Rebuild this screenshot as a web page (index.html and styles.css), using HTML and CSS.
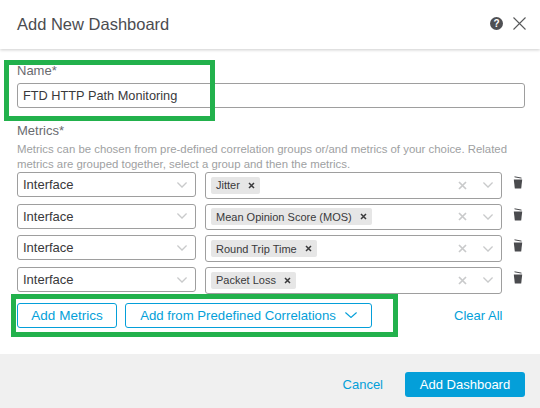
FILE: index.html
```html
<!DOCTYPE html>
<html lang="en">
<head>
<meta charset="utf-8">
<title>Add New Dashboard</title>
<link rel="stylesheet" href="styles.css">
</head>
<body>
<div class="dialog">
  <header class="head">
    <h1 class="title">Add New Dashboard</h1>
    <div class="head-icons">
      <svg class="help" width="13" height="13" viewBox="0 0 13 13"><circle cx="6.5" cy="6.5" r="6.5" fill="#4f5054"/><text x="6.5" y="10" class="help-q">?</text></svg>
      <svg width="13" height="13" viewBox="0 0 13 13"><path d="M.5.5l12 12M12.500.5l-12 12" stroke="#58595b" stroke-width="1.100" fill="none"/></svg>
    </div>
  </header>
  <main class="body">
    <label class="label">Name*</label>
    <div class="name-input">FTD HTTP Path Monitoring</div>
    <label class="label metrics-label">Metrics*</label>
    <p class="hint">Metrics can be chosen from pre-defined correlation groups or/and metrics of your choice. Related metrics are grouped together, select a group and then the metrics.</p>
    <div class="rows">
      <div class="row">
        <div class="select">Interface<svg width="10" height="6" viewBox="0 0 10 6"><path d="M.4.500l4.600 4.500 4.600-4.500" stroke="#c9cacb" stroke-width="1.300" fill="none"/></svg></div>
        <div class="multi"><span class="tag">Jitter<svg class="tag-x" width="7" height="7" viewBox="0 0 7 7"><path d="M1 1l5 5M6 1l-5 5" stroke="#39393b" stroke-width="1.500"/></svg></span>
          <span class="multi-icons"><svg width="9" height="9" viewBox="0 0 9 9"><path d="M1 1l7 7M8 1l-7 7" stroke="#c9cacb" stroke-width="1.700"/></svg><svg width="10" height="6" viewBox="0 0 10 6"><path d="M.4.500l4.600 4.500 4.600-4.500" stroke="#c9cacb" stroke-width="1.300" fill="none"/></svg></span></div>
        <svg class="trash" width="10" height="13" viewBox="0 0 10 13"><path d="M1.500.8l7 1.300" stroke="#4a4b4e" stroke-width="1"/><path d="M.8 3.500h8.400l-1 9h-6.400z" fill="#4a4b4e"/></svg>
      </div>
      <div class="row">
        <div class="select">Interface<svg width="10" height="6" viewBox="0 0 10 6"><path d="M.4.500l4.600 4.500 4.600-4.500" stroke="#c9cacb" stroke-width="1.300" fill="none"/></svg></div>
        <div class="multi"><span class="tag">Mean Opinion Score (MOS)<svg class="tag-x" width="7" height="7" viewBox="0 0 7 7"><path d="M1 1l5 5M6 1l-5 5" stroke="#39393b" stroke-width="1.500"/></svg></span>
          <span class="multi-icons"><svg width="9" height="9" viewBox="0 0 9 9"><path d="M1 1l7 7M8 1l-7 7" stroke="#c9cacb" stroke-width="1.700"/></svg><svg width="10" height="6" viewBox="0 0 10 6"><path d="M.4.500l4.600 4.500 4.600-4.500" stroke="#c9cacb" stroke-width="1.300" fill="none"/></svg></span></div>
        <svg class="trash" width="10" height="13" viewBox="0 0 10 13"><path d="M1.500.8l7 1.300" stroke="#4a4b4e" stroke-width="1"/><path d="M.8 3.500h8.400l-1 9h-6.400z" fill="#4a4b4e"/></svg>
      </div>
      <div class="row">
        <div class="select">Interface<svg width="10" height="6" viewBox="0 0 10 6"><path d="M.4.500l4.600 4.500 4.600-4.500" stroke="#c9cacb" stroke-width="1.300" fill="none"/></svg></div>
        <div class="multi"><span class="tag">Round Trip Time<svg class="tag-x" width="7" height="7" viewBox="0 0 7 7"><path d="M1 1l5 5M6 1l-5 5" stroke="#39393b" stroke-width="1.500"/></svg></span>
          <span class="multi-icons"><svg width="9" height="9" viewBox="0 0 9 9"><path d="M1 1l7 7M8 1l-7 7" stroke="#c9cacb" stroke-width="1.700"/></svg><svg width="10" height="6" viewBox="0 0 10 6"><path d="M.4.500l4.600 4.500 4.600-4.500" stroke="#c9cacb" stroke-width="1.300" fill="none"/></svg></span></div>
        <svg class="trash" width="10" height="13" viewBox="0 0 10 13"><path d="M1.500.8l7 1.300" stroke="#4a4b4e" stroke-width="1"/><path d="M.8 3.500h8.400l-1 9h-6.400z" fill="#4a4b4e"/></svg>
      </div>
      <div class="row">
        <div class="select">Interface<svg width="10" height="6" viewBox="0 0 10 6"><path d="M.4.500l4.600 4.500 4.600-4.500" stroke="#c9cacb" stroke-width="1.300" fill="none"/></svg></div>
        <div class="multi"><span class="tag">Packet Loss<svg class="tag-x" width="7" height="7" viewBox="0 0 7 7"><path d="M1 1l5 5M6 1l-5 5" stroke="#39393b" stroke-width="1.500"/></svg></span>
          <span class="multi-icons"><svg width="9" height="9" viewBox="0 0 9 9"><path d="M1 1l7 7M8 1l-7 7" stroke="#c9cacb" stroke-width="1.700"/></svg><svg width="10" height="6" viewBox="0 0 10 6"><path d="M.4.500l4.600 4.500 4.600-4.500" stroke="#c9cacb" stroke-width="1.300" fill="none"/></svg></span></div>
        <svg class="trash" width="10" height="13" viewBox="0 0 10 13"><path d="M1.500.8l7 1.300" stroke="#4a4b4e" stroke-width="1"/><path d="M.8 3.500h8.400l-1 9h-6.400z" fill="#4a4b4e"/></svg>
      </div>
    </div>
    <div class="actions">
      <button class="btn btn-metrics">Add Metrics</button>
      <button class="btn btn-pre">Add from Predefined Correlations<svg width="12" height="6" viewBox="0 0 12 6"><path d="M.4.500l5.600 5 5.600-5" stroke="#049fd9" stroke-width="1.100" fill="none"/></svg></button>
      <a class="clear">Clear All</a>
    </div>
  </main>
  <footer class="foot">
    <a class="cancel">Cancel</a>
    <button class="primary">Add Dashboard</button>
  </footer>
  <div class="mark mark-name"></div>
  <div class="mark mark-actions"></div>
</div>
</body>
</html>
```
FILE: styles.css
```css
* { box-sizing: border-box; }
html, body { margin: 0; padding: 0; }
body { font-family: "Liberation Sans", Arial, sans-serif; font-size: 13px; color: #39393b; background: #fff; }
.dialog { position: relative; width: 540px; height: 408px; display: flex; flex-direction: column; overflow: hidden; }
.head { height: 49px; flex: none; display: flex; align-items: center; justify-content: space-between; padding: 0 14px 0 17px; box-shadow: 0 1px 3px rgba(0,0,0,.2); position: relative; }
.title { margin: 0; font-size: 16.5px; font-weight: 400; color: #4b4c50; }
.head-icons { display: flex; align-items: center; gap: 10px; margin-bottom: 3px; }
.help-q { font: 700 10px "Liberation Sans", sans-serif; fill: #fff; text-anchor: middle; }
.body { flex: 1; padding: 14px 15px 0 17px; }
.label { display: block; color: #6a6b6f; font-size: 13px; line-height: 15px; }
.name-input { height: 25px; margin-top: 5px; margin-bottom: 15px; border: 1px solid #9e9e9e; border-radius: 3px; padding-left: 5px; line-height: 23px; font-size: 12.75px; color: #39393b; }
.hint { margin: 4px 0 0; font-size: 11.4px; line-height: 15px; color: #9e9fa2; width: 508px; }
.rows { display: flex; flex-direction: column; gap: 5.7px; }
.row { display: flex; align-items: flex-start; height: 26px; }
.select { width: 179px; height: 25px; border: 1px solid #9e9e9e; border-radius: 3px; padding: 0 8px 0 5px; display: flex; justify-content: space-between; align-items: center; color: #39393b; }
.multi { width: 297px; height: 26.5px; margin-left: 9px; border: 1px solid #9e9e9e; border-radius: 3px; display: flex; justify-content: space-between; align-items: center; padding: 0 8px 0 5px; }
.tag { display: inline-flex; align-items: center; height: 17px; padding: 0 5px; background: #e6e6e6; border-radius: 2px; font-size: 11px; color: #39393b; }
.tag-x { margin-left: 8px; }
.multi-icons { display: flex; align-items: center; gap: 16px; }
.trash { margin-left: 11px; margin-top: 4px; }
.actions { display: flex; align-items: center; margin-top: 9.9px; }
.btn { height: 25px; background: #fff; border: 1px solid #049fd9; border-radius: 3px; color: #049fd9; font: 13.2px "Liberation Sans", Arial, sans-serif; padding: 0; display: flex; align-items: center; justify-content: center; }
.btn-metrics { width: 100px; font-size: 13.5px; }
.btn-pre { width: 247px; margin-left: 8px; gap: 9px; }
.clear { margin-left: 82px; color: #049fd9; }
.foot { height: 54px; flex: none; background: #f0f0f0; display: flex; align-items: center; justify-content: flex-end; padding: 7px 15px 0 0; }
.cancel { color: #049fd9; margin-right: 22px; }
.primary { width: 120px; height: 25px; border: 0; border-radius: 3px; background: #049fd9; color: #fff; font: 13px "Liberation Sans", Arial, sans-serif; }
.mark { position: absolute; border: 5px solid #22b14c; pointer-events: none; }
.mark-name { left: 4px; top: 60px; width: 211px; height: 61px; }
.mark-actions { left: 11px; top: 294px; width: 387px; height: 43px; }
```
